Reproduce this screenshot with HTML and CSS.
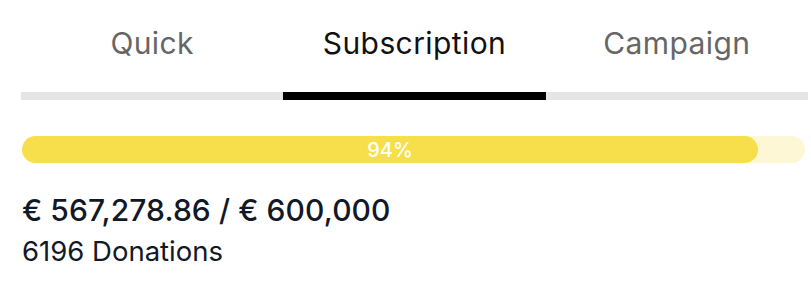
FILE: index.html
```html
<!DOCTYPE html>
<html lang="en">
<head>
<meta charset="utf-8">
<link rel="stylesheet" href="styles.css">
</head>
<body>
<div class="widget">
  <nav class="tabs">
    <div class="tab">Quick</div>
    <div class="tab active">Subscription</div>
    <div class="tab">Campaign</div>
  </nav>
  <div class="progress">
    <div class="fill" style="width: 94%"><span>94%</span></div>
  </div>
  <div class="amount">€ 567,278.86 / € 600,000</div>
  <div class="count">6196 Donations</div>
</div>
</body>
</html>
```

FILE: styles.css
```css
html, body {
  margin: 0;
  padding: 0;
  background: #ffffff;
}
body {
  font-family: Inter, "Noto Sans", sans-serif;
}
.widget {
  width: 787px;
  margin-left: 21px;
}
.tabs {
  display: grid;
  grid-template-columns: 1fr 1fr 1fr;
}
.tab {
  text-align: center;
  font-size: 30px;
  line-height: 34px;
  padding-top: 26px;
  padding-bottom: 32px;
  color: #666666;
  border-bottom: 8px solid #e5e5e5;
  letter-spacing: 0.4px;
}
.tab.active {
  color: #111111;
  border-bottom-color: #000000;
}
.progress {
  margin-top: 36px;
  margin-left: 1px;
  width: 783px;
  height: 27px;
  border-radius: 14px;
  background: #fdf7d6;
  display: flex;
}
.fill {
  height: 100%;
  border-radius: 14px;
  background: #f7df4c;
  display: flex;
  align-items: center;
  justify-content: center;
}
.fill span {
  color: #ffffff;
  font-size: 20px;
  font-weight: 500;
  line-height: 20px;
}
.amount {
  margin-top: 29px;
  margin-left: 1px;
  font-size: 30px;
  font-weight: 500;
  letter-spacing: 0.1px;
  line-height: 36px;
  color: #111827;
}
.count {
  margin-top: 6px;
  margin-left: 1px;
  font-size: 27.5px;
  line-height: 34px;
  color: #111827;
}
```
